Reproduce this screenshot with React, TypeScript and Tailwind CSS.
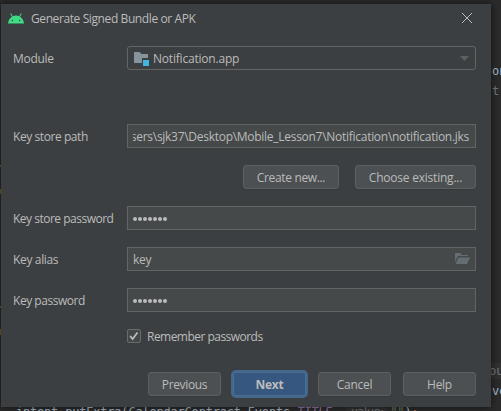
import React from 'react';

const field = 'flex h-6 w-[349px] items-center border border-[#646464] bg-[#45494a] pl-[5px]';
const button = 'flex h-6 items-center justify-center rounded-[3px] border border-[#5e6060] bg-[#4c5052] pt-px shadow-[0_1px_0_#36393b]';

function Row({ label, tracking, className, children }: { label: string; tracking: string; className: string; children: React.ReactNode }) {
  return (
    <div className={`flex h-6 items-center ${className}`}>
      <label className={`w-[114px] shrink-0 pt-px ${tracking}`}>{label}</label>
      {children}
    </div>
  );
}

function Dots() {
  return (
    <div className="flex gap-[1.5px] pt-[1.5px]">
      {Array.from({ length: 7 }, (_, i) => (
        <span key={i} className="size-[3.5px] rounded-full bg-[#bbbbbb]" />
      ))}
    </div>
  );
}

function EditorBackdrop() {
  return (
    <div className="absolute inset-0 overflow-hidden whitespace-pre font-['DejaVu_Sans_Mono',monospace] text-[12px] leading-[16px] text-[#a9b7c6]">
      <span className="absolute left-[492px] top-[63px]">on</span>
      <span className="absolute left-[492px] top-[83px] text-[#787878]">t</span>
      <div className="absolute left-[491px] top-[363px] h-4 w-[10px] bg-[#323232]" />
      <span className="absolute left-[489px] top-[363px] text-[#787878]">ou</span>
      <span className="absolute left-[492px] top-[383px]">ve</span>
      <span className="absolute left-0 top-[165px] h-[2px] w-px bg-[#75602f]" />
      <span className="absolute left-0 top-[189px] h-[5px] w-px bg-[#7c5920]" />
      <span className="absolute left-0 top-[306px] h-[2px] w-px bg-[#75602f]" />
      <span className="absolute left-0 top-[329px] h-[6px] w-px bg-[#7c5920]" />
      <div className="absolute left-[16px] top-[404px] flex tracking-[-0.2px]">
        <span>intent.putExtra(CalendarContract.Events.</span>
        <span className="italic text-[#9876aa]">TITLE</span>
        <span>, </span>
        <span className="mr-[3px] w-[41px] rounded-[3px] bg-[#323232] pl-[5px] font-['DejaVu_Sans',sans-serif] text-[11px] text-[#787878]">value:</span>
        <span className="text-[#6a8759]">""</span><span>)</span><span className="text-[#cc7832]">;</span>
      </div>
    </div>
  );
}

export default function App() {
  return (
    <div className="relative h-[411px] w-[501px] overflow-hidden bg-[#2b2b2b] pl-px pt-1">
      <EditorBackdrop />
      <div className="relative h-[403px] w-[490px] bg-[#3c3f41] pl-3 font-['Open_Sans',sans-serif] text-[12px] leading-[16px] whitespace-nowrap text-[#bbbbbb] shadow-[0_0_8px_rgba(0,0,0,0.6)]">
        <div className="-ml-3 flex h-[29px] items-center pl-[7px] pr-[19px]">
          <svg width="16" height="16" viewBox="0 0 16 16" className="mr-[7px]">
            <path d="M0 12.500C.3 9.300 1.800 7 4 5.700L2.200 2.800l.8-.5 1.800 3a8 8 0 0 1 6.400 0l1.800-3 .8.5L12 5.700C14.200 7 15.700 9.300 16 12.500Z" fill="#3ddc84" />
            <circle cx="4.400" cy="9.500" r=".7" fill="#3c3f41" /><circle cx="11.600" cy="9.500" r=".7" fill="#3c3f41" />
          </svg>
          <span className="pt-px tracking-[-0.4px]">Generate Signed Bundle or APK</span>
          <svg width="10" height="10" viewBox="0 0 10 10" className="mb-px ml-auto" stroke="#bbbbbb" fill="none"><path d="M0 0 10 10M10 0 0 10" /></svg>
        </div>
        <Row label="Module" tracking="tracking-[-0.3px]" className="mt-[13px]">
          <div className="flex h-6 w-[349px] items-center rounded-[3px] border border-[#646464] pl-[6px] pr-[6px]">
            <svg width="16" height="16" viewBox="0 0 16 16" className="mr-[3px]">
              <path d="M0 2h5.500l2 2H14v4H8v5H0Z" fill="#87939a" /><path d="M9 10h6v6H9Z" fill="#40b6e0" />
            </svg>
            <span className="pt-px tracking-[-0.2px]">Notification.app</span>
            <svg width="9" height="5" viewBox="0 0 9 5" className="ml-auto"><path d="M0 0h9L4.500 5Z" fill="#5e6060" /></svg>
          </div>
        </Row>
        <Row label="Key store path" tracking="tracking-[-0.43px]" className="mt-[54px]">
          <div className={`${field} pr-[6px]`}>
            <div className="flex flex-1 justify-end overflow-hidden pt-px tracking-[-0.28px]"><span>Users\sjk37\Desktop\Mobile_Lesson7\Notification\notification.jks</span></div>
          </div>
        </Row>
        <div className="mt-[17px] flex gap-4 pl-[230px]">
          <button className={`${button} w-24 tracking-[-0.35px]`}>Create new...</button>
          <button className={`${button} w-[121px] tracking-[-0.22px]`}>Choose existing...</button>
        </div>
        <Row label="Key store password" tracking="tracking-[-0.5px]" className="mt-[17px]"><div className={field}><Dots /></div></Row>
        <Row label="Key alias" tracking="tracking-[-0.35px]" className="mt-[17px]">
          <div className={`${field} pr-[5px]`}>
            <span className="pt-px tracking-[-0.3px]">key</span>
            <svg width="15" height="12" viewBox="0 0 15 12" className="ml-auto" fill="#646d71"><path d="M0 0h5l2 2h6v1H3L0 9Z" /><path d="M3.500 4.500H15L12 11H0.500Z" /></svg>
          </div>
        </Row>
        <Row label="Key password" tracking="tracking-[-0.47px]" className="mt-[17px]"><div className={field}><Dots /></div></Row>
        <div className="mt-[17px] flex h-[14px] items-center pl-[114px]">
          <span className="mr-[6px] flex size-[14px] items-center justify-center rounded-[2px] border border-[#6b6b6b] bg-[#43494a]">
            <svg width="10" height="10" viewBox="0 0 10 10" fill="none" stroke="#bbbbbb" strokeWidth="1.800"><path d="m1.200 5 2.400 3L8.500 1.500" /></svg>
          </span>
          <span className="pt-px tracking-[-0.53px]">Remember passwords</span>
        </div>
        <div className="mt-[27px] flex items-center pl-[135px]">
          <button className={`${button} w-[73px] tracking-[-0.35px]`}>Previous</button>
          <button className="ml-[10px] flex h-7 w-[77px] items-center justify-center rounded-[5px] border-2 border-[#43688f] bg-[#365880] p-0 font-bold">
            <span className="flex h-6 w-[73px] items-center justify-center rounded-[3px] border border-[#4c708c] pt-px tracking-[-0.3px]">Next</span>
          </button>
          <button className={`${button} ml-[10px] w-[73px] tracking-[-0.3px]`}>Cancel</button>
          <button className={`${button} ml-3 w-[73px] tracking-[-0.3px]`}>Help</button>
        </div>
      </div>
    </div>
  );
}
